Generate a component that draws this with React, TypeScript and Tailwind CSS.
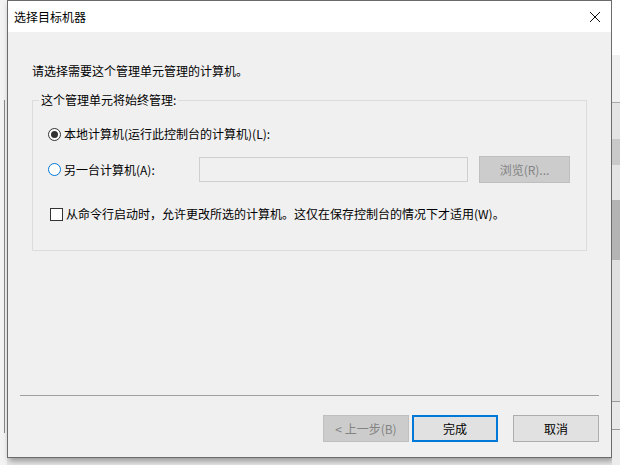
import React from 'react';

const font = { fontFamily: '"Microsoft YaHei UI", "Noto Sans CJK SC", "Noto Sans", sans-serif' };

function Radio({ checked }: { checked: boolean }) {
  return (
    <span
      className={`flex h-[13px] w-[13px] items-center justify-center rounded-full border bg-white ${
        checked ? 'border-[#333]' : 'border-[#0078d7]'
      }`}
    >
      {checked && <span className="h-[7px] w-[7px] rounded-full bg-[#333]" />}
    </span>
  );
}

function Button({ children, disabled, primary }: { children: React.ReactNode; disabled?: boolean; primary?: boolean }) {
  return (
    <button
      className={`flex h-[27px] w-[86px] items-center justify-center text-[12px] ${
        disabled
          ? 'border border-[#bfbfbf] bg-[#cccccc] text-[#838383]'
          : primary
          ? 'border-2 border-[#0078d7] bg-[#e1e1e1] text-black'
          : 'border border-[#adadad] bg-[#e1e1e1] text-black'
      }`}
    >
      {children}
    </button>
  );
}

export default function App() {
  return (
    <div className="flex h-[465px] w-[620px] overflow-hidden bg-[#e6e6e6]" style={font}>
      {/* left background strip */}
      <div className="flex w-[7px] flex-col bg-[#f3f3f3]">
        <div className="h-[100px]" />
        <div className="ml-[4px] h-[333px] w-[7px] border-l border-[#8a8a8a]" />
      </div>

      {/* dialog */}
      <div className="flex h-[458px] w-[606px] flex-col border border-[#6b6b6b] bg-[#f0f0f0] shadow-[2px_3px_6px_rgba(0,0,0,0.35)]">
        <div className="flex h-[31px] items-center justify-between bg-white pl-[6px] pr-[8px]">
          <span className="text-[12px] text-black">选择目标机器</span>
          <svg width="12" height="12" viewBox="0 0 12 12" className="mr-[2px]">
            <path d="M1 1L11 11M11 1L1 11" stroke="#111" strokeWidth="1" />
          </svg>
        </div>

        <div className="flex flex-1 flex-col px-[24px]">
          <p className="mt-[30px] text-[12px] text-black">请选择需要这个管理单元管理的计算机。</p>

          <fieldset className="mt-[11px] h-[160px] w-[555px] border border-[#dcdcdc] px-[15px] pb-0 pt-0">
            <legend className="ml-[-9px] px-[2px] text-[12px] text-black">这个管理单元将始终管理:</legend>

            <div className="mt-[16px] flex items-center gap-[3px] text-[12px] text-black">
              <Radio checked />
              <span>本地计算机(运行此控制台的计算机)(L):</span>
            </div>

            <div className="mt-[13px] flex items-center text-[12px] text-black">
              <Radio checked={false} />
              <span className="ml-[3px] w-[135px]">另一台计算机(A):</span>
              <div className="h-[25px] w-[269px] border border-[#cfcfcf] bg-[#f0f0f0]" />
              <div className="ml-[11px] flex h-[27px] w-[91px] items-center justify-center border border-[#bfbfbf] bg-[#cccccc] text-[#838383]">
                浏览(R)...
              </div>
            </div>

            <div className="mt-[22px] flex items-center gap-[3px] text-[12px] text-black">
              <span className="ml-[2px] h-[13px] w-[13px] border border-[#333] bg-white" />
              <span>从命令行启动时，允许更改所选的计算机。这仅在保存控制台的情况下才适用(W)。</span>
            </div>
          </fieldset>

          <div className="flex-1" />
          <div className="mx-[-12px] h-px bg-[#a0a0a0]" />
          <div className="flex justify-end gap-[3px] pb-[15px] pt-[19px] mr-[-12px]">
            <Button disabled>&lt; 上一步(B)</Button>
            <Button primary>完成</Button>
            <div className="w-[9px]" />
            <Button>取消</Button>
          </div>
        </div>
      </div>

      {/* right background strip */}
      <div className="flex w-[8px] flex-col">
        <div className="h-[55px] bg-white" />
        <div className="h-[48px] bg-[#f0f0f0] border-b border-[#a8a8a8]" />
        <div className="h-[36px] bg-[#e4e4e4]" />
        <div className="h-[26px] bg-[#c9c9c9]" />
        <div className="h-[35px] bg-[#e4e4e4]" />
        <div className="h-[60px] bg-[#b4b4b4]" />
        <div className="h-[142px] bg-[#e0e0e0] border-b border-[#999]" />
        <div className="h-[28px] bg-[#e8e8e8] border-b border-[#999]" />
        <div className="flex-1 bg-[#ececec]" />
      </div>
    </div>
  );
}
